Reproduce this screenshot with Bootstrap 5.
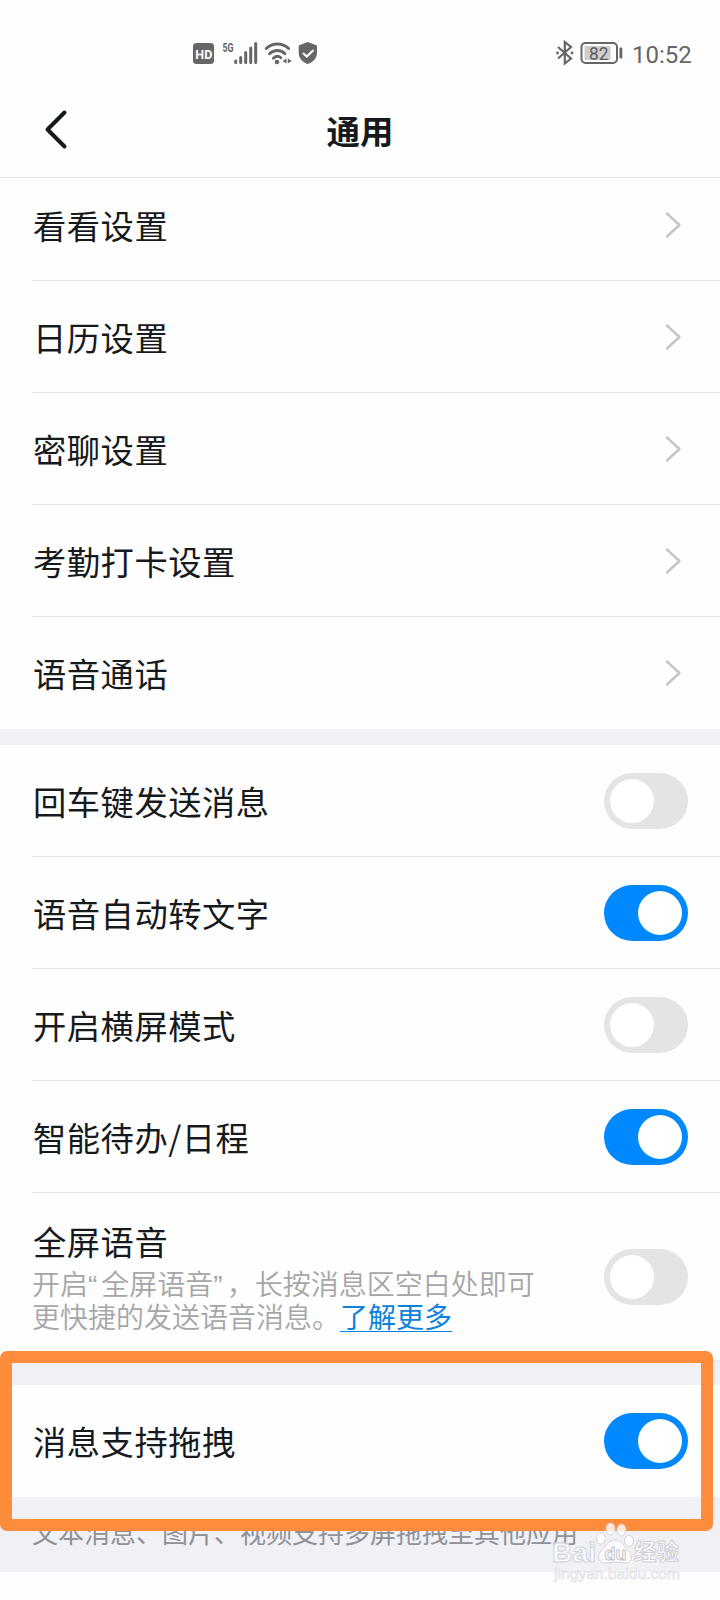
<!DOCTYPE html>
<html lang="zh-CN">
<head>
<meta charset="utf-8">
<meta name="viewport" content="width=device-width, initial-scale=1">
<title>通用</title>
<link href="https://cdn.jsdelivr.net/npm/bootstrap@5.3.0/dist/css/bootstrap.min.css" rel="stylesheet">
<style>
body{width:720px;height:1600px;overflow:hidden;background:#fefefe;color:#171a1d;font-family:"Noto Sans CJK SC",sans-serif}
svg{display:block;flex:none}
.status{height:82px;padding:22px 28px 0 193px;color:#666}
.clock{font:24px/28px Roboto,sans-serif;width:60px;margin-left:9px;padding-top:3px;white-space:nowrap}
.topbar{height:96px;border-bottom:1px solid #e3e4e6;padding-left:44px}
.page-title{font-size:33.5px;line-height:48px;font-weight:700;top:24px}
.setting{height:112px;padding-right:32px;border-bottom:1px solid #e6e7e9}
.settings{padding-left:32px}
.settings .setting:last-child{border-bottom-color:transparent}
.settings.first-group{height:551px;overflow:hidden}
.first-group .setting:first-child{height:103px;padding-bottom:9px}
.chevron{margin-right:6px}
.label-text{font-size:33.3px;letter-spacing:.5px;line-height:48px;padding:1px 0 0 1px}
.band{height:16px;background:#f1f0f5}
.band-top{height:25px;border-top:1px solid #e6e7e9}
.switch{width:84px;height:56px;border-radius:28px;background:#e2e4e6;padding:6px;flex:none}
.switch i{width:44px;height:44px;border-radius:50%;background:#fff;display:block}
.switch.on{background:#0089ff}
.switch.on i{margin-left:28px}
.setting.voice{height:167px;padding-top:2px}
.voice .label-text{line-height:44px;padding:0 0 0 1px;margin-bottom:6px}
.hint{font-family:"Liberation Sans","Noto Sans CJK SC",sans-serif;font-size:28px;line-height:33px;color:#a5a6a8;font-weight:350;white-space:nowrap}
.hint .quote-mark{letter-spacing:4px}
.hint a{color:#0d82dd;font-weight:400;text-decoration-thickness:1px;text-underline-offset:3px}
.foot{height:75px;background:#f1f0f5;padding:16px 32px 0;font-size:26px;line-height:38px;color:#8f9297;white-space:nowrap}
.highlight{left:0;top:1351px;width:713px;height:180px;border:12px solid #ff8c3a;border-radius:7px}
.wm{left:545px;top:1515px}
</style>
</head>
<body class="position-relative">
<header>
<div class="status d-flex align-items-start">
<svg width="126" height="30" viewBox="193 38 126 30" class="mt-3">
<rect x="193" y="43" width="21" height="21" rx="3.5" fill="#666"/>
<text x="195.300" y="59" font-family="Roboto" font-weight="700" font-size="13" fill="#fff" textLength="17" lengthAdjust="spacingAndGlyphs">HD</text>
<text x="222.500" y="51.800" font-family="Roboto" font-weight="700" font-size="12.500" fill="#666" textLength="11" lengthAdjust="spacingAndGlyphs">5G</text>
<g stroke="#666" stroke-width="3" stroke-linecap="round"><path d="M235.700 61v1.400M240.700 57.500v5M245.700 52.500v10M250.700 48v14.500M255.700 43.500v19"/></g>
<g fill="none" stroke="#666" stroke-width="2.800" stroke-linecap="round"><path d="M266.200 48.500c6.500-6 16-6 22.500 0M269.500 53.700c4.500-4.300 11.500-4.300 15.500 0M273.300 58.300c2.500-2.300 5.500-2.300 7.500-.5"/></g>
<circle cx="277" cy="62" r="2.300" fill="#666"/><path d="M286.500 58.500v5l-4-2.500zM287.800 58.500v5l4-2.500z" fill="#666"/>
<path d="M307.700 42l9.300 3.500v7.500c0 5-3.800 9-9.300 11-5.500-2-9-6-9-11v-7.500z" fill="#666"/><path d="M303 53l3.800 3.500 6.700-6.500" fill="none" stroke="#fff" stroke-width="2"/>
</svg>
<svg width="70" height="30" viewBox="554 38 70 30" class="ms-auto mt-3">
<path d="M559 47l13 11.500-6.200 5v-21.500l6.200 5-13 11.500" fill="none" stroke="#666" stroke-width="2.200"/><circle cx="558.500" cy="53" r="1.400" fill="#666"/><circle cx="573" cy="53" r="1.400" fill="#666"/>
<rect x="582.500" y="43" width="35.500" height="20" rx="4" fill="none" stroke="#666" stroke-width="2"/><rect x="585.500" y="46" width="26" height="14" fill="#ccc"/><rect x="620.500" y="47.500" width="2.800" height="11" rx="1" fill="#666"/>
<text x="590" y="59.500" font-family="Roboto" font-size="17.500" fill="#5c5c5c" textLength="19.500" lengthAdjust="spacingAndGlyphs">82</text>
</svg>
<div class="clock mt-3">10:52</div>
</div>
<div class="topbar position-relative d-flex align-items-center">
<svg width="24" height="42" viewBox="0 0 24 42"><path d="M20.500 3.500L3.500 20.500 20.500 37.500" fill="none" stroke="#171a1d" stroke-width="4" stroke-linecap="round" stroke-linejoin="round"/></svg>
<h1 class="page-title position-absolute start-0 end-0 text-center m-0">通用</h1>
</div>
</header>
<main>
<svg class="d-none"><symbol id="chev" viewBox="0 0 18 28"><path d="M3 2.500L15.500 14 3 25.500" fill="none" stroke="#c4c5c7" stroke-width="2.500" stroke-linecap="round" stroke-linejoin="round"/></symbol></svg>
<section class="settings first-group">
<div class="setting d-flex align-items-center justify-content-between"><span class="label-text">看看设置</span><svg width="18" height="28" class="chevron"><use href="#chev"/></svg></div>
<div class="setting d-flex align-items-center justify-content-between"><span class="label-text">日历设置</span><svg width="18" height="28" class="chevron"><use href="#chev"/></svg></div>
<div class="setting d-flex align-items-center justify-content-between"><span class="label-text">密聊设置</span><svg width="18" height="28" class="chevron"><use href="#chev"/></svg></div>
<div class="setting d-flex align-items-center justify-content-between"><span class="label-text">考勤打卡设置</span><svg width="18" height="28" class="chevron"><use href="#chev"/></svg></div>
<div class="setting d-flex align-items-center justify-content-between"><span class="label-text">语音通话</span><svg width="18" height="28" class="chevron"><use href="#chev"/></svg></div>
</section>
<div class="band"></div>
<section class="settings">
<div class="setting d-flex align-items-center justify-content-between"><span class="label-text">回车键发送消息</span><span class="switch"><i></i></span></div>
<div class="setting d-flex align-items-center justify-content-between"><span class="label-text">语音自动转文字</span><span class="switch on"><i></i></span></div>
<div class="setting d-flex align-items-center justify-content-between"><span class="label-text">开启横屏模式</span><span class="switch"><i></i></span></div>
<div class="setting d-flex align-items-center justify-content-between"><span class="label-text">智能待办/日程</span><span class="switch on"><i></i></span></div>
<div class="setting voice d-flex align-items-center justify-content-between"><div><div class="label-text">全屏语音</div><div class="hint">开启<span class="quote-mark">“</span>全屏语音<span class="quote-mark">”</span>，长按消息区空白处即可<br>更快捷的发送语音消息。<a href="#">了解更多</a></div></div><span class="switch"><i></i></span></div>
</section>
<div class="band band-top"></div>
<section class="settings">
<div class="setting d-flex align-items-center justify-content-between"><span class="label-text">消息支持拖拽</span><span class="switch on"><i></i></span></div>
</section>
<footer class="foot">文本消息、图片、视频支持多屏拖拽至其他应用</footer>
</main>
<div class="highlight position-absolute"></div>
<svg class="wm position-absolute" width="145" height="75" viewBox="545 1515 145 75">
<g fill="#fff" fill-opacity=".8" stroke="#cfcfd4" stroke-width=".9">
<ellipse cx="601" cy="1538.500" rx="4.300" ry="5.800"/><ellipse cx="610.500" cy="1529" rx="4.500" ry="6"/><ellipse cx="621.500" cy="1530" rx="4.500" ry="6"/><ellipse cx="629" cy="1541" rx="4.500" ry="5.800"/>
<path d="M615 1540c7 0 9 7 14 11 5 6 2 13-5 12-5-1-11-1-16 0-9 1-12-6-7-12 5-4 7-11 14-11z"/>
<text x="552" y="1561.500" font-family="Liberation Sans" font-weight="700" font-size="27" textLength="44" lengthAdjust="spacingAndGlyphs">Bai</text>
<text x="634" y="1560" font-family="Noto Sans CJK SC" font-weight="700" font-size="22.500">经验</text>
</g>
<text x="554" y="1579" font-family="Liberation Sans" font-size="15" fill="#fff" stroke="#dedee2" stroke-width=".7" textLength="126" lengthAdjust="spacingAndGlyphs">jingyan.baidu.com</text>
<text x="604.500" y="1559.500" font-family="Liberation Sans" font-weight="700" font-size="18" fill="#fff" stroke="#c4c4c9" stroke-width="1" textLength="22" lengthAdjust="spacingAndGlyphs">du</text>
</svg>
<script src="https://cdn.jsdelivr.net/npm/bootstrap@5.3.0/dist/js/bootstrap.bundle.min.js"></script>
</body>
</html>
